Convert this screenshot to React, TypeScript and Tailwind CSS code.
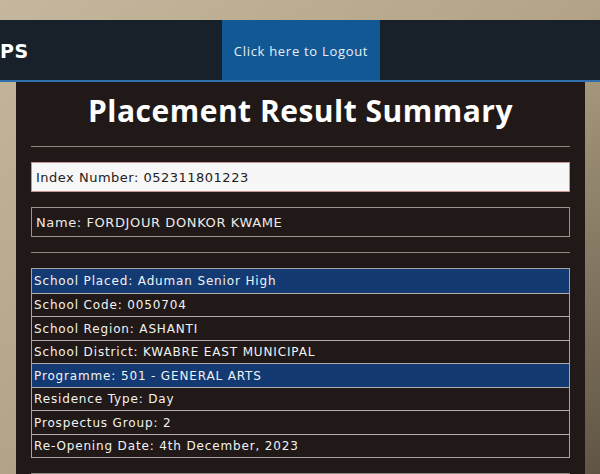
import React from "react"

const rows: { label: string; hl?: boolean }[] = [
  { label: "School Placed: Aduman Senior High", hl: true },
  { label: "School Code: 0050704" },
  { label: "School Region: ASHANTI" },
  { label: "School District: KWABRE EAST MUNICIPAL" },
  { label: "Programme: 501 - GENERAL ARTS", hl: true },
  { label: "Residence Type: Day" },
  { label: "Prospectus Group: 2" },
  { label: "Re-Opening Date: 4th December, 2023" },
]

export default function App() {
  return (
    <div className="w-[600px] h-[474px] overflow-hidden bg-gradient-to-br from-[#c4b79d] via-[#b3a487] to-[#5f5444] pt-[20px] font-['DejaVu_Sans',sans-serif]">
      <nav className="h-[62px] bg-[#18202a] border-b-2 border-[#2f6fae] flex items-stretch">
        <div className="w-[222px] flex items-center pt-[2px]">
          <span className="text-white text-[19px] font-bold tracking-wide">PS</span>
        </div>
        <a className="w-[158px] bg-[#115894] flex items-center justify-center pt-[3px] text-[#e8eef5] text-[13px] font-['Open_Sans',sans-serif] tracking-[0.7px]">
          Click here to Logout
        </a>
      </nav>

      <div className="ml-[16px] w-[569px] h-[400px] bg-[#201917] px-[15px]">
        <h1 className="pt-[10px] text-center text-white text-[30px] leading-[38px] font-bold font-['Open_Sans',sans-serif] tracking-[0.5px]">
          Placement Result Summary
        </h1>
        <hr className="mt-[16px] border-t border-[#8e8884]" />

        <div className="mt-[15px] h-[30px] bg-[#f7f7f7] border border-[#c7928f] flex items-center px-[4px] pt-[1px] text-[#222] text-[13px] tracking-[0.5px]">
          Index Number: 052311801223
        </div>
        <div className="mt-[15px] h-[30px] border border-[#99938f] flex items-center px-[4px] pt-[1px] text-[#eeeae8] text-[13px] tracking-[0.6px]">
          Name: FORDJOUR DONKOR KWAME
        </div>
        <hr className="mt-[15px] border-t border-[#8e8884]" />

        <div className="mt-[15px] border border-[#a9a4a2]">
          {rows.map((r, i) => (
            <div
              key={i}
              className={`h-[23.5px] flex items-center px-[2px] pt-[1px] text-[12px] text-[#f2f2f2] tracking-[0.85px] ${i > 0 ? "border-t border-[#b3aeac]" : ""} ${r.hl ? "bg-[#133a73]" : ""}`}
            >
              {r.label}
            </div>
          ))}
        </div>
        <hr className="mt-[15px] border-t border-[#8e8884]" />
      </div>
    </div>
  )
}
